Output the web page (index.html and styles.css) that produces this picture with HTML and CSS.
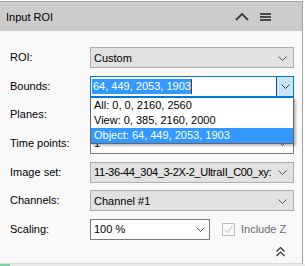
FILE: index.html
```html
<!DOCTYPE html>
<html>
<head>
<meta charset="utf-8">
<link rel="stylesheet" href="styles.css">
</head>
<body>
<div class="panel">
  <div class="header">
    <span class="title">Input ROI</span>
    <div class="tools">
      <svg class="collapse" width="14" height="8" viewBox="0 0 14 8"><polyline points="1,7 7,1 13,7" fill="none" stroke="#444" stroke-width="2"/></svg>
      <svg class="menu" width="11" height="8" viewBox="0 0 11 8"><rect x="0" y="0" width="11" height="2" fill="#4a4a4a"/><rect x="0" y="3" width="11" height="2" fill="#4a4a4a"/><rect x="0" y="6" width="11" height="2" fill="#4a4a4a"/></svg>
    </div>
  </div>
  <div class="body">
    <div class="form">
      <span class="label">ROI:</span>
      <div class="combo gray"><span class="value">Custom</span><svg class="chev" width="9" height="5" viewBox="0 0 9 5"><polyline points="0.5,0.5 4.5,4.5 8.5,0.5" fill="none" stroke="#555" stroke-width="1"/></svg></div>

      <span class="label">Bounds:</span>
      <div class="combo edit focus">
        <span class="value"><span class="sel">64, 449, 2053, 1903</span><span class="caret"></span></span>
        <span class="btn"><svg class="chev" width="9" height="5" viewBox="0 0 9 5"><polyline points="0.5,0.5 4.5,4.5 8.5,0.5" fill="none" stroke="#333" stroke-width="1"/></svg></span>
        <div class="list">
          <div class="item">All: 0, 0, 2160, 2560</div>
          <div class="item">View: 0, 385, 2160, 2000</div>
          <div class="item active">Object: 64, 449, 2053, 1903</div>
        </div>
      </div>

      <span class="label">Planes:</span>
      <div class="combo edit"><span class="value">1</span><svg class="chev" width="9" height="5" viewBox="0 0 9 5"><polyline points="0.5,0.5 4.5,4.5 8.5,0.5" fill="none" stroke="#555" stroke-width="1"/></svg></div>

      <span class="label">Time points:</span>
      <div class="combo edit"><span class="value">1</span><svg class="chev" width="9" height="5" viewBox="0 0 9 5"><polyline points="0.5,0.5 4.5,4.5 8.5,0.5" fill="none" stroke="#555" stroke-width="1"/></svg></div>

      <span class="label">Image set:</span>
      <div class="combo gray"><span class="value tight">11-36-44_304_3-2X-2_UltraII_C00_xy:</span><svg class="chev" width="9" height="5" viewBox="0 0 9 5"><polyline points="0.5,0.5 4.5,4.5 8.5,0.5" fill="none" stroke="#555" stroke-width="1"/></svg></div>

      <span class="label">Channels:</span>
      <div class="combo gray"><span class="value">Channel #1</span><svg class="chev" width="9" height="5" viewBox="0 0 9 5"><polyline points="0.5,0.5 4.5,4.5 8.5,0.5" fill="none" stroke="#555" stroke-width="1"/></svg></div>

      <span class="label">Scaling:</span>
      <div class="scaling-row">
        <div class="combo edit small"><span class="value">100 %</span><svg class="chev" width="9" height="5" viewBox="0 0 9 5"><polyline points="0.5,0.5 4.5,4.5 8.5,0.5" fill="none" stroke="#555" stroke-width="1"/></svg></div>
        <label class="check">
          <span class="box"><svg width="11" height="11" viewBox="0 0 11 11"><polyline points="1.5,5.5 4.5,8.5 9.5,1.5" fill="none" stroke="#bcbcbc" stroke-width="1"/></svg></span>
          <span class="check-text">Include Z</span>
        </label>
      </div>
    </div>
    <div class="footer">
      <svg width="9" height="10" viewBox="0 0 9 10"><polyline points="0.5,4.5 4.5,0.5 8.5,4.5" fill="none" stroke="#333" stroke-width="1.2"/><polyline points="0.5,9 4.5,5 8.5,9" fill="none" stroke="#333" stroke-width="1.2"/></svg>
    </div>
  </div>
</div>
<div class="next"><span class="accent"></span></div>
</body>
</html>
```

FILE: styles.css
```css
html, body {
  margin: 0;
  padding: 0;
  background: #ffffff;
}
body {
  font-family: "Liberation Sans", Arial, sans-serif;
  font-size: 11px;
  color: #000;
  width: 305px;
  height: 266px;
  overflow: hidden;
}
.panel {
  margin-top: 1px;
  width: 302px;
  border-top: 1px solid #a3a3a3;
  border-right: 1px solid #a3a3a3;
  background: #f9f9f9;
}
.header {
  height: 29px;
  background: #cccccc;
  display: flex;
  align-items: center;
  justify-content: space-between;
  padding: 0 0 0 6px;
}
.title {
  font-size: 11px;
  color: #000;
}
.tools {
  display: flex;
  align-items: center;
  gap: 11px;
  padding-right: 31px;
}
.collapse { display: block; margin-top: 1px; }
.menu { display: block; margin-top: 1px; }
.body {
  padding: 16px 9px 0 10px;
  height: 216px;
  display: flex;
  flex-direction: column;
  border-bottom: 1px solid #dadada;
}
.form {
  display: grid;
  grid-template-columns: 80px 1fr;
  grid-auto-rows: 21px;
  row-gap: 7.67px;
  align-items: center;
}
.label {
  line-height: 21px;
}
.combo {
  position: relative;
  height: 21px;
  box-sizing: border-box;
  border: 1px solid #adadad;
  display: flex;
  align-items: center;
  padding-left: 3px;
}
.combo.gray {
  background: #e1e1e1;
}
.combo.edit {
  background: #ffffff;
  border-color: #7a7a7a;
}
.combo.focus {
  border-color: #0078d7;
  padding-left: 1px;
}
.value {
  flex: 1;
  white-space: nowrap;
  overflow: hidden;
  min-width: 0;
  display: flex;
  align-items: center;
}
.value.tight {
  display: block;
  letter-spacing: -0.33px;
  margin-right: 3px;
}
.chev {
  display: block;
  flex: none;
  margin: 1px 6px 0 4px;
}
.sel {
  background: #3399ff;
  color: #fff;
  line-height: 15px;
  padding: 0 0 0 1px;
}
.caret {
  display: inline-block;
  width: 1px;
  height: 15px;
  background: #6b3d1a;
}
.btn {
  align-self: stretch;
  width: 16px;
  margin: 0;
  background: #cce4f7;
  border-left: 1px solid #005499;
  display: flex;
  align-items: center;
  justify-content: center;
}
.btn .chev { margin: 1px 0 0 0; }
.list {
  position: absolute;
  left: -1px;
  right: -1px;
  top: 20px;
  z-index: 5;
  background: #fff;
  border: 1px solid #646464;
  border-top-color: #0078d7;
  box-shadow: 2px 2px 2px rgba(0, 0, 0, 0.25);
}
.item {
  height: 15px;
  line-height: 15px;
  padding-left: 3px;
  white-space: nowrap;
}
.item.active {
  background: #3399ff;
  color: #fff;
}
.scaling-row {
  display: flex;
  align-items: center;
  height: 21px;
}
.combo.small {
  width: 120px;
  flex: none;
}
.combo.small .chev { margin-right: 4px; }
.check {
  display: flex;
  align-items: center;
  margin-left: 12px;
  gap: 6px;
}
.box {
  width: 13px;
  height: 13px;
  box-sizing: border-box;
  border: 1px solid #bcbcbc;
  background: #f9f9f9;
  display: flex;
  align-items: center;
  justify-content: center;
}
.box svg { display: block; }
.check-text {
  color: #6d6d78;
}
.footer {
  display: flex;
  justify-content: flex-end;
  padding: 7px 8px 0 0;
}
.footer svg { display: block; }
.next {
  height: 2px;
  background: #e8e8e8;
}
.accent {
  display: block;
  width: 10px;
  height: 2px;
  background: #7fd1a0;
}
```
